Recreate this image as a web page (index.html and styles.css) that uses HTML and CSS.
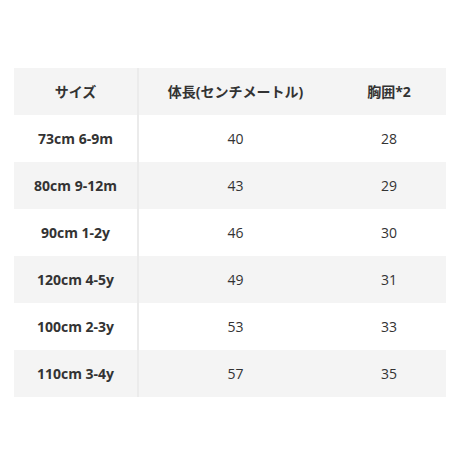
FILE: index.html
```html
<!DOCTYPE html>
<html>
<head>
<meta charset="utf-8">
<link rel="stylesheet" href="styles.css">
</head>
<body>
<table class="size-table">
  <colgroup>
    <col class="c1"><col class="c2"><col class="c3">
  </colgroup>
  <thead>
    <tr><th>サイズ</th><th>体長(センチメートル)</th><th>胸囲*2</th></tr>
  </thead>
  <tbody>
    <tr><th>73cm 6-9m</th><td>40</td><td>28</td></tr>
    <tr><th>80cm 9-12m</th><td>43</td><td>29</td></tr>
    <tr><th>90cm 1-2y</th><td>46</td><td>30</td></tr>
    <tr><th>120cm 4-5y</th><td>49</td><td>31</td></tr>
    <tr><th>100cm 2-3y</th><td>53</td><td>33</td></tr>
    <tr><th>110cm 3-4y</th><td>57</td><td>35</td></tr>
  </tbody>
</table>
</body>
</html>
```
FILE: styles.css
```css
html, body {
  margin: 0;
  padding: 0;
  background: #ffffff;
}
body {
  padding: 68px 14px 0 14px;
  font-family: "Open Sans", "Noto Sans CJK JP", sans-serif;
  color: #333333;
}
.size-table {
  width: 432px;
  border-collapse: collapse;
  table-layout: fixed;
  font-size: 14px;
}
.c1 { width: 124px; }
.c2 { width: 194px; }
.c3 { width: 114px; }
.size-table th,
.size-table td {
  height: 47px;
  padding: 0;
  text-align: center;
  vertical-align: middle;
  line-height: 20px;
}
.size-table th { font-weight: 700; }
.size-table td { font-weight: 400; }
.size-table tr > :first-child {
  border-right: 2px solid #ebebeb;
}
.size-table thead tr,
.size-table tbody tr:nth-child(even) {
  background: #f4f4f4;
}
```
